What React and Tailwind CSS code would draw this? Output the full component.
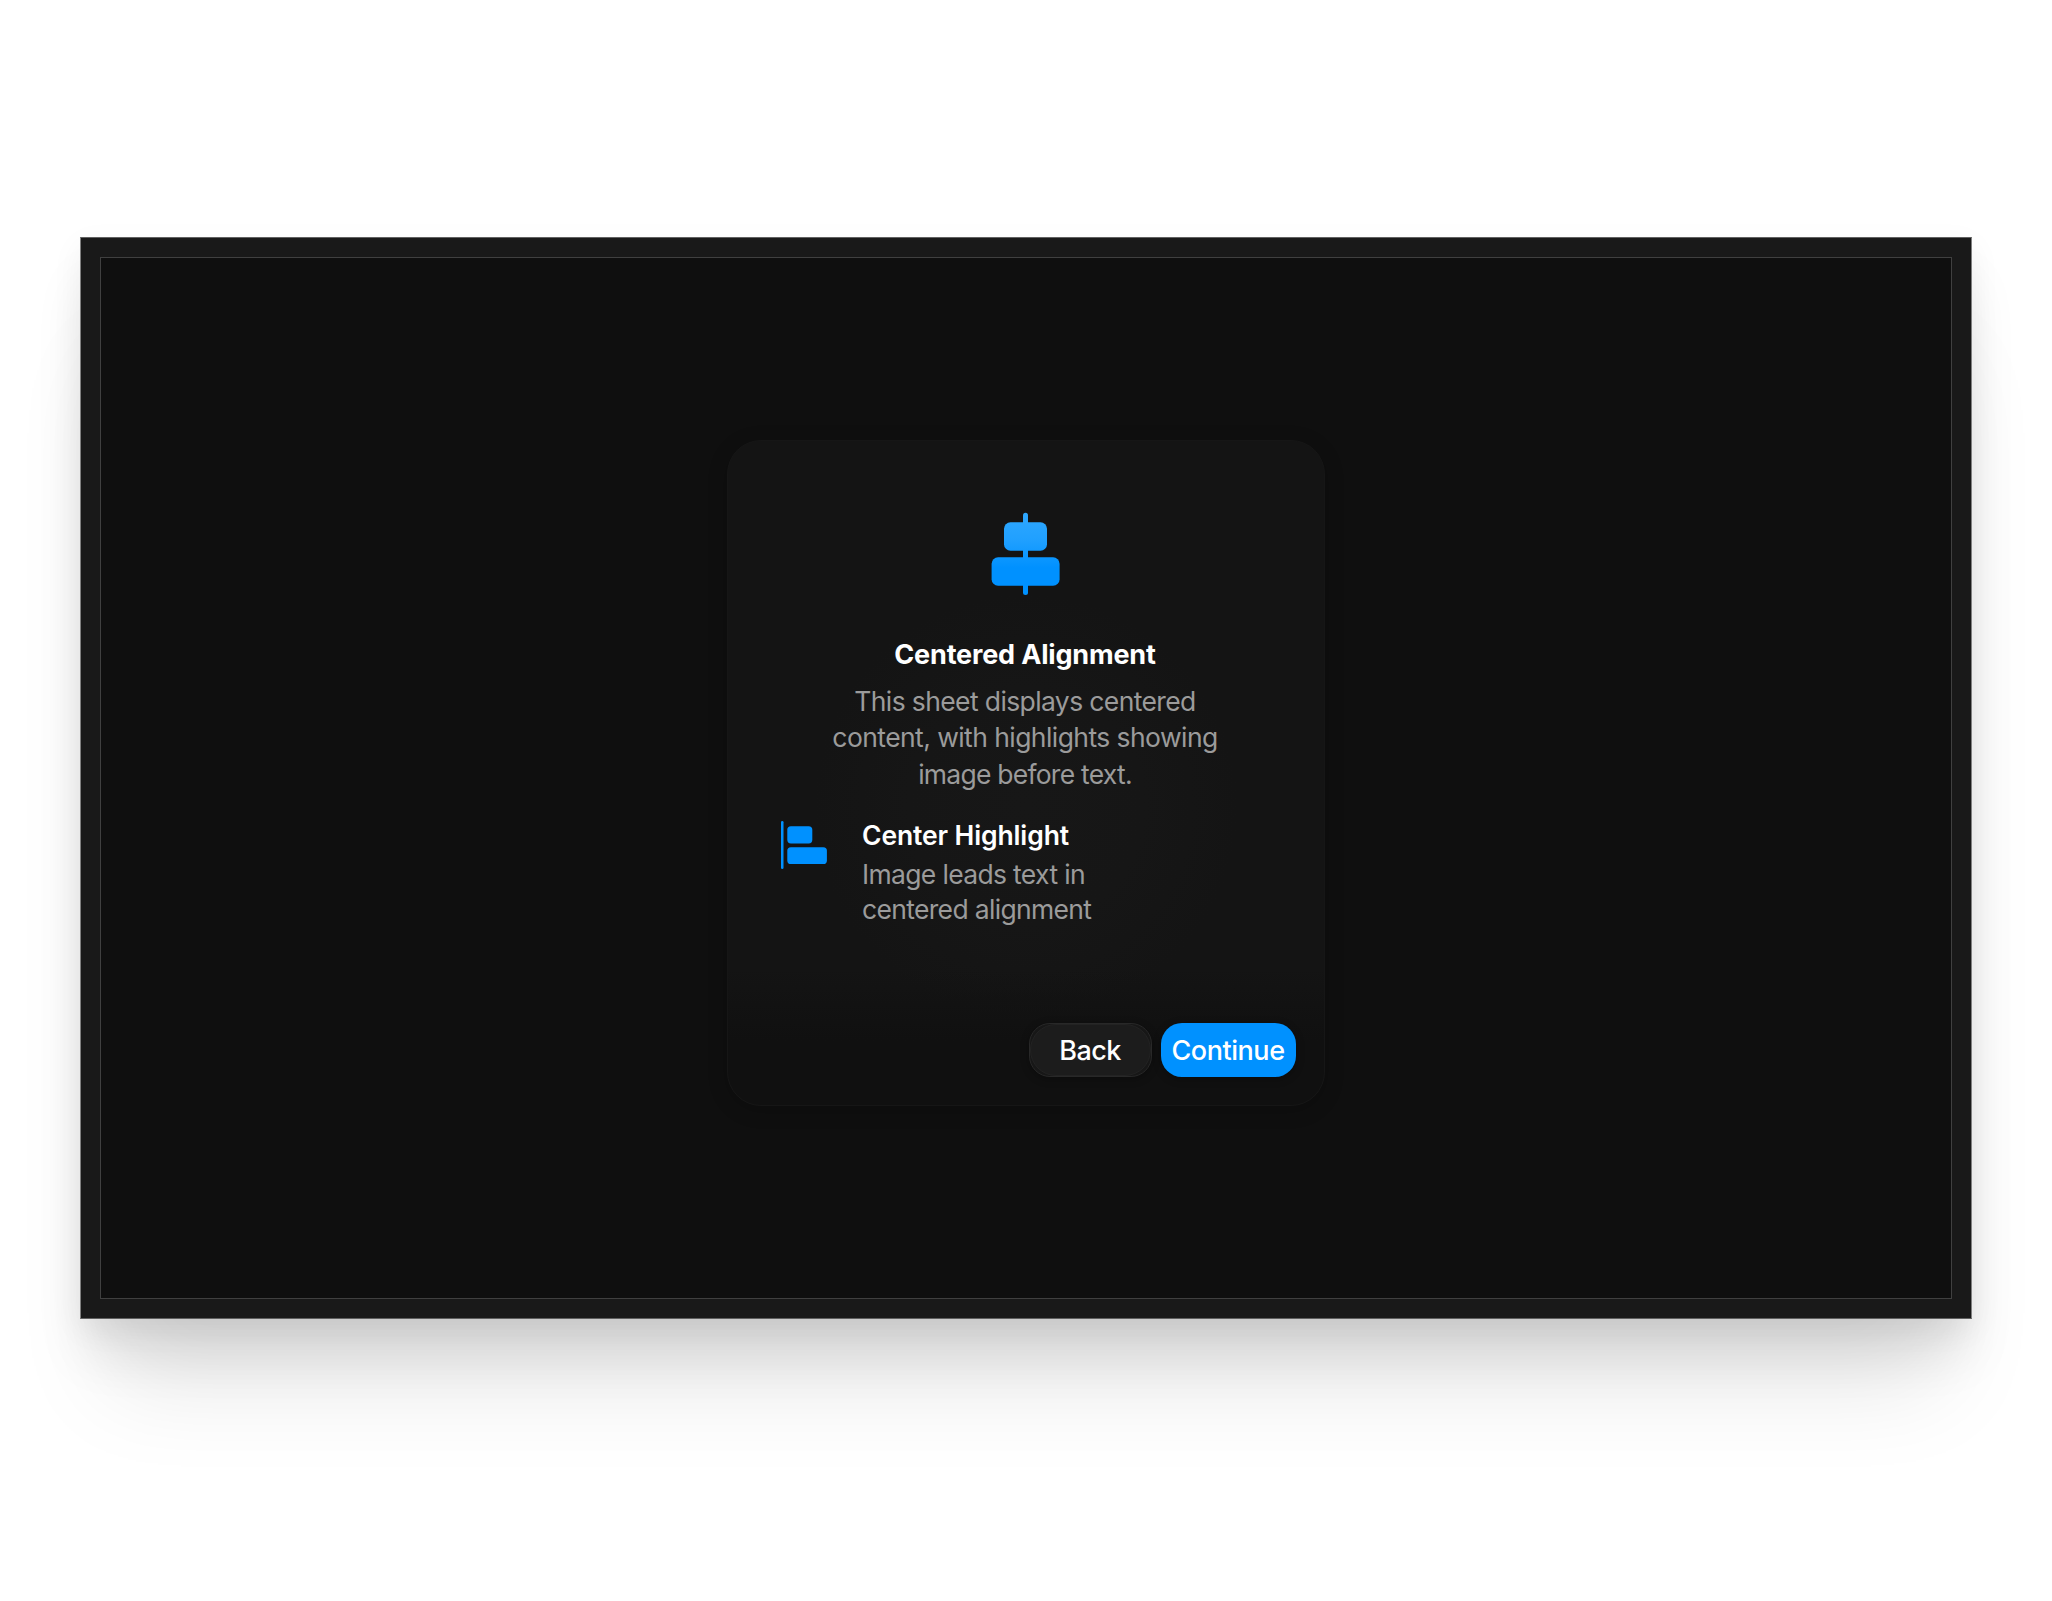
function CenterAlignIcon() {
  return (
    <svg width="72" height="88" viewBox="0 0 72 88" className="block" aria-hidden="true">
      <defs>
        <linearGradient id="center-fill" gradientUnits="userSpaceOnUse" x1="0" y1="2" x2="0" y2="58">
          <stop offset="0" stopColor="#2fa8ff" />
          <stop offset="0.5" stopColor="#20a0ff" />
          <stop offset="1" stopColor="#0091ff" />
        </linearGradient>
      </defs>
      <g fill="url(#center-fill)">
        <rect x="33" y="2.8" width="5" height="82.2" rx="2.5" />
        <rect x="14" y="12.3" width="43" height="28.4" rx="6.5" />
        <rect x="1.6" y="47.3" width="68" height="28.4" rx="6.5" />
      </g>
    </svg>
  );
}

function LeftAlignIcon() {
  return (
    <svg width="48" height="50" viewBox="0 0 48 50" className="block" fill="#0091ff" aria-hidden="true">
      <rect x="1" y="1" width="2.5" height="48" rx="1.25" />
      <rect x="7.3" y="6.2" width="25" height="17.2" rx="3.6" />
      <rect x="7.3" y="27.2" width="39.6" height="16.8" rx="3.6" />
    </svg>
  );
}

function Sheet() {
  return (
    <section className="flex h-[666px] w-[598px] flex-col rounded-[34px] border border-[#161616] bg-[#141414] bg-[linear-gradient(to_bottom,transparent_528px,#101010_600px),radial-gradient(circle_at_50%_55%,#171717_0%,#161616_25%,#141414_45%)] shadow-[0_4px_20px_rgba(0,0,0,0.2)]">
      <div className="mt-[69px] flex justify-center">
        <CenterAlignIcon />
      </div>
      <h1 className="mt-[39px] pr-[2px] text-center text-[27px] leading-9 font-bold tracking-[-0.17px] text-white">
        Centered Alignment
      </h1>
      <p className="mt-[10px] pr-[2px] text-center text-[26.5px] leading-[36.33px] text-[#9b9b9b]">
        <span className="block tracking-[-0.62px]">This sheet displays centered</span>
        <span className="block tracking-[-0.57px]">content, with highlights showing</span>
        <span className="block tracking-[-0.76px]">image before text.</span>
      </p>
      <div className="mt-[26px] flex pl-[52px]">
        <div className="mt-[2px] w-[82px]">
          <LeftAlignIcon />
        </div>
        <div className="-mt-px">
          <h2 className="text-[26.5px] leading-9 font-semibold tracking-[-0.12px] text-white">
            Center Highlight
          </h2>
          <p className="mt-[4px] text-[26.5px] leading-[35px] text-[#9b9b9b]">
            <span className="block tracking-[-0.66px]">Image leads text in</span>
            <span className="block tracking-[-0.67px]">centered alignment</span>
          </p>
        </div>
      </div>
      <div className="mt-auto mr-[28px] mb-[28px] flex justify-end gap-[9px]">
        <button className="h-[54px] w-[123px] rounded-[21px] border border-[#282828] bg-[#171717] text-[27px] font-medium tracking-[-0.6px] text-white shadow-[0_2px_8px_rgba(0,0,0,0.3)]">
          <span className="flex h-full w-full items-center justify-center rounded-[26px] border border-[#232323] bg-[#1c1c1c] pt-[2px] pr-px">
            Back
          </span>
        </button>
        <button className="flex h-[54px] w-[135px] items-center justify-center rounded-[21px] bg-[#0091ff] pt-[2px] pr-px text-[27px] font-medium tracking-[-0.45px] text-white shadow-[0_2px_8px_rgba(0,0,0,0.3)]">
          Continue
        </button>
      </div>
    </section>
  );
}

export default function App() {
  return (
    <div className="flex h-[1601px] w-[2052px] flex-col overflow-hidden bg-white pt-[237px] pl-[80px] font-['Inter',sans-serif] antialiased">
      <main className="h-[1082px] w-[1892px] border border-x-[#808080] border-y-[#606060] bg-[#191919] p-[19px] shadow-[0_95px_90px_-30px_rgba(0,0,0,0.1),0_40px_50px_-5px_rgba(0,0,0,0.09),0_10px_30px_rgba(0,0,0,0.06)]">
        <div className="flex h-full w-full justify-center border border-[#404040] bg-[#0f0f0f] pt-[182px]">
          <Sheet />
        </div>
      </main>
    </div>
  );
}
